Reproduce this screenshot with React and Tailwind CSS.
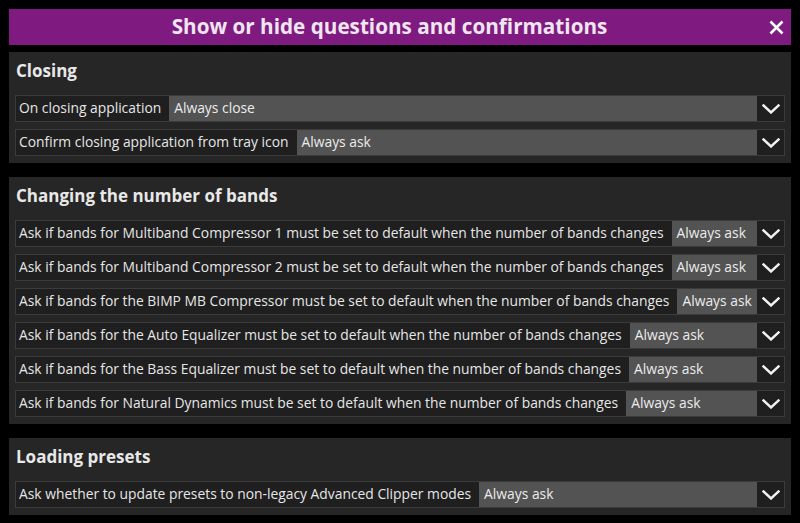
import React from "react";

const font = { fontFamily: '"Open Sans", "Noto Sans", sans-serif' };

function Chevron() {
  return (
    <svg width="18" height="10" viewBox="0 0 18 10" fill="none">
      <path d="M1.5 1.5 L9 8.5 L16.5 1.5" stroke="#f2f2f2" strokeWidth="2.4" strokeLinecap="square" strokeLinejoin="miter" />
    </svg>
  );
}

function Row({ label, value }) {
  return (
    <div className="flex h-[27px] border border-[#3b3b3b] bg-[#1f1f1f]">
      <div className="flex shrink-0 items-center pl-[3px] pr-[8px] text-[13.85px] text-[#e6e6e6] whitespace-nowrap">{label}</div>
      <div className="flex min-w-0 flex-1 items-center bg-[#535353] pl-[5px] text-[13.85px] text-[#ececec] whitespace-nowrap">{value}</div>
      <div className="flex w-[27px] shrink-0 items-center justify-center bg-[#1f1f1f]">
        <Chevron />
      </div>
    </div>
  );
}

function Section({ title, rows }) {
  return (
    <div className="flex flex-col bg-[#262626] px-[6px] pb-[7px]">
      <div className="flex h-[43px] items-start pt-[6px] pl-[1px] text-[17px] font-bold text-[#e8e8e8]">{title}</div>
      <div className="flex flex-col gap-[7px]">
        {rows.map((r, i) => (
          <Row key={i} label={r[0]} value={r[1]} />
        ))}
      </div>
    </div>
  );
}

export default function App() {
  return (
    <div className="flex h-[523px] w-[800px] flex-col bg-black p-[9px] pb-0" style={font}>
      <div className="relative flex h-[36px] items-center justify-center bg-[#7f1b80] pr-[21px]">
        <span className="text-[20.7px] font-bold text-[#f0e6f0]">Show or hide questions and confirmations</span>
        <svg className="absolute right-[7px] top-[11px]" width="15" height="15" viewBox="0 0 15 15">
          <path d="M1.5 1.5 L13.5 13.5 M13.5 1.5 L1.5 13.5" stroke="#ffffff" strokeWidth="2.6" />
        </svg>
      </div>
      <div className="mt-[7px] flex flex-col gap-[14px]">
        <Section
          title="Closing"
          rows={[
            ["On closing application", "Always close"],
            ["Confirm closing application from tray icon", "Always ask"],
          ]}
        />
        <Section
          title="Changing the number of bands"
          rows={[
            ["Ask if bands for Multiband Compressor 1 must be set to default when the number of bands changes", "Always ask"],
            ["Ask if bands for Multiband Compressor 2 must be set to default when the number of bands changes", "Always ask"],
            ["Ask if bands for the BIMP MB Compressor must be set to default when the number of bands changes", "Always ask"],
            ["Ask if bands for the Auto Equalizer must be set to default when the number of bands changes", "Always ask"],
            ["Ask if bands for the Bass Equalizer must be set to default when the number of bands changes", "Always ask"],
            ["Ask if bands for Natural Dynamics must be set to default when the number of bands changes", "Always ask"],
          ]}
        />
        <Section
          title="Loading presets"
          rows={[["Ask whether to update presets to non-legacy Advanced Clipper modes", "Always ask"]]}
        />
      </div>
    </div>
  );
}
